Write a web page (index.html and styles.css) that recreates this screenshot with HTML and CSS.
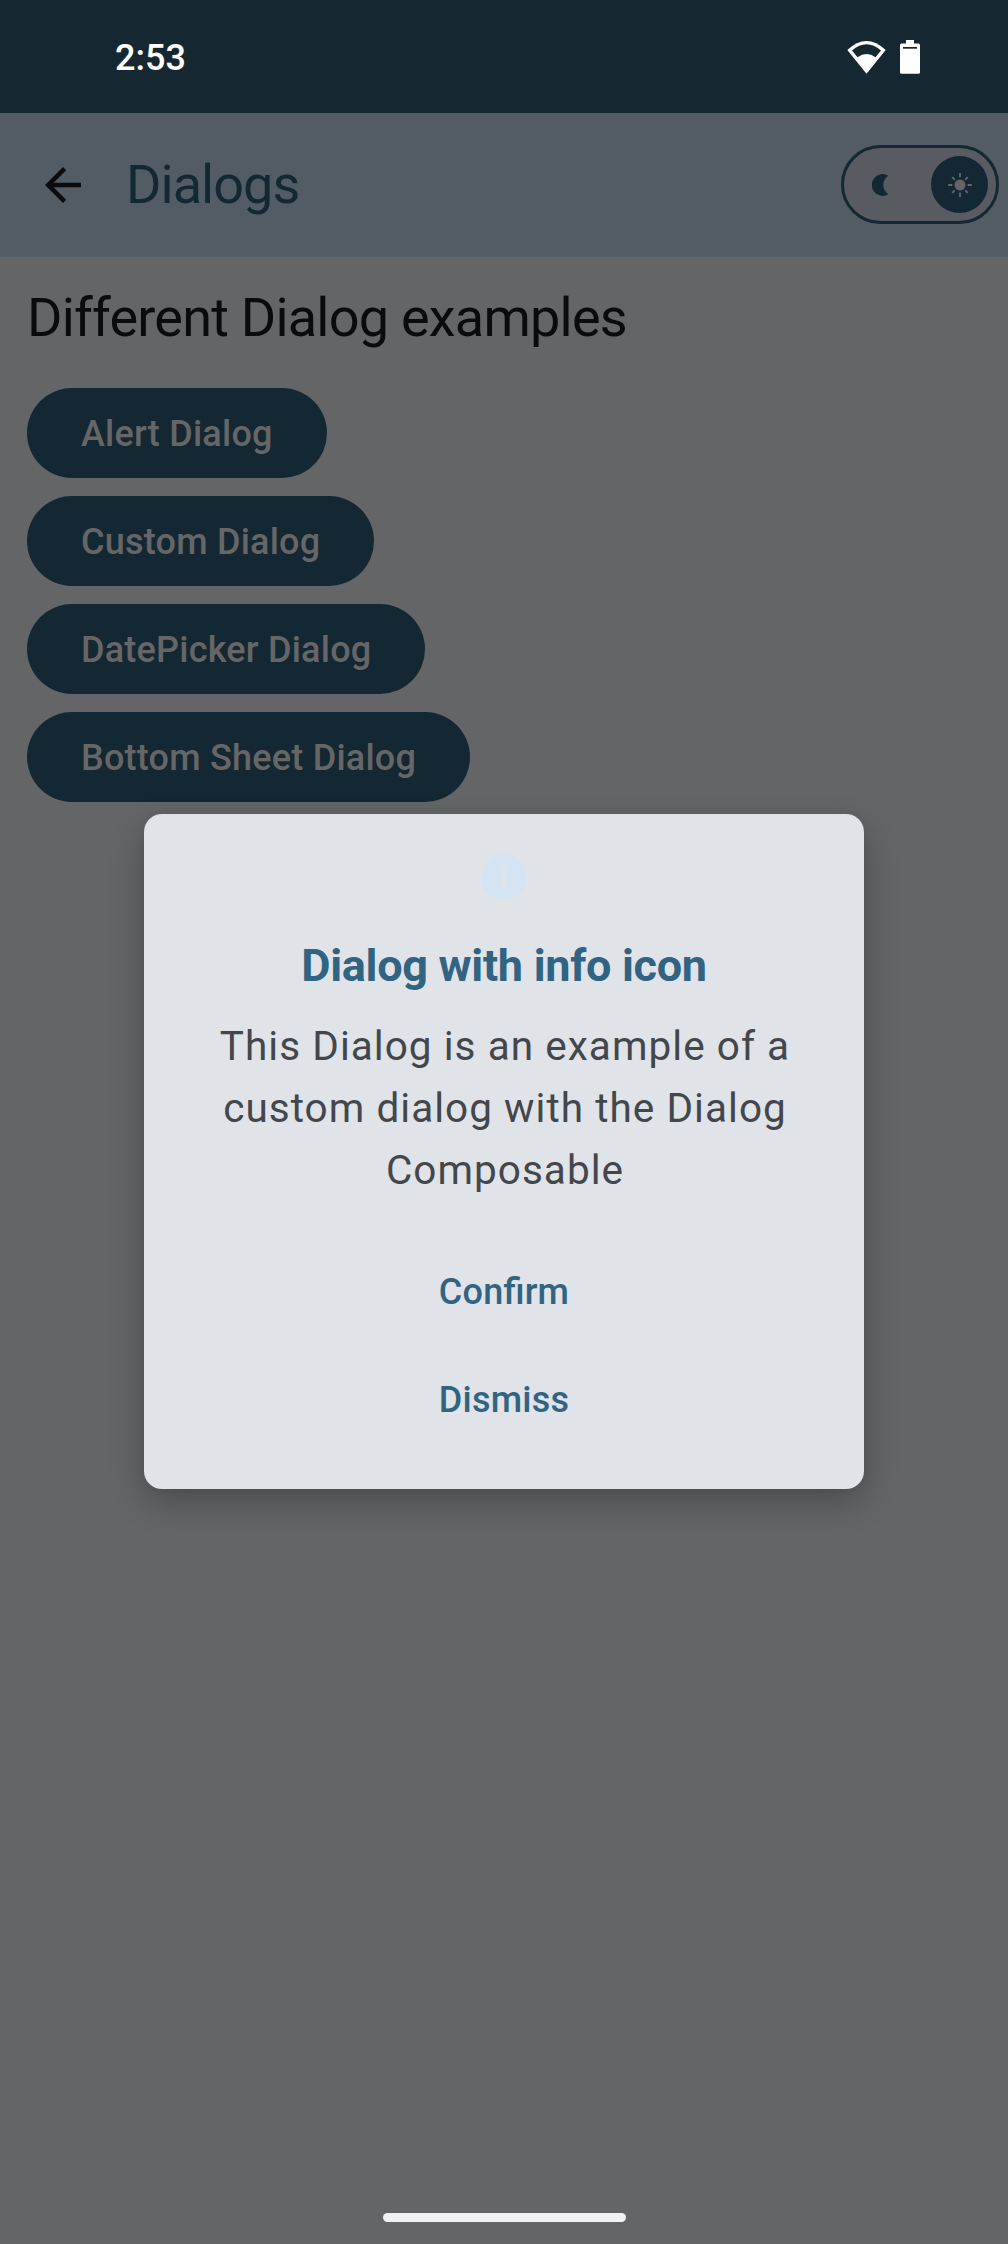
FILE: index.html
```html
<!DOCTYPE html>
<html lang="en">
<head>
<meta charset="utf-8">
<title>Dialogs</title>
<link rel="stylesheet" href="styles.css">
</head>
<body>
<div class="screen">
  <header class="status-bar">
    <span class="clock">2:53</span>
    <div class="status-icons">
      <svg class="wifi" viewBox="0 0 40 34" width="40" height="34">
        <path d="M.3 10Q19.500-8 38.700 10L19.500 33.700Z" fill="#fff"/>
        <path d="M5 10.600Q19.500-2 34 10.600L28.500 17.300Q19.500 10.700 10.500 17.300Z" fill="#152832"/>
      </svg>
      <svg class="battery" viewBox="0 0 20 34" width="20" height="34">
        <path d="M6 0h8v3.500h4.500a1.500 1.500 0 0 1 1.500 1.500v27.200a1.500 1.500 0 0 1-1.500 1.500h-17a1.500 1.500 0 0 1-1.500-1.500v-27.200a1.500 1.500 0 0 1 1.500-1.500h4.500z" fill="#fff"/>
        <path d="M3 7h14v1.700h-14z" fill="#152832"/>
      </svg>
    </div>
  </header>
  <nav class="app-bar">
    <svg class="back" viewBox="0 0 24 24" width="54" height="54"><path d="M20 11H7.830l5.590-5.590L12 4l-8 8 8 8 1.410-1.410L7.830 13H20v-2z" fill="#0a0b0c"/></svg>
    <h1 class="app-title">Dialogs</h1>
    <div class="theme-toggle">
      <svg class="moon" viewBox="0 0 17 22" width="17" height="22"><path d="M16.300 1.700A10.900 10.900 0 1 0 16.300 20.300Q11.300 16.500 11.300 11Q11.300 5.500 16.300 1.700Z" fill="#142833"/></svg>
      <div class="thumb">
        <svg viewBox="0 0 24 24" width="24" height="24">
          <circle cx="12" cy="12" r="5.500" fill="#646566"/>
          <path d="M12 .8v2.800M12 20.400v2.800M.8 12h2.800M20.400 12h2.800M4.700 4.700l1.500 1.500M17.800 17.800l1.500 1.500M4.700 19.300l1.500-1.500M17.800 6.200l1.500-1.500" stroke="#646566" stroke-width="1.900" stroke-linecap="round"/>
        </svg>
      </div>
    </div>
  </nav>
  <main class="content">
    <h2 class="heading">Different Dialog examples</h2>
    <div class="button-list">
      <button class="filled">Alert Dialog</button>
      <button class="filled">Custom Dialog</button>
      <button class="filled">DatePicker Dialog</button>
      <button class="filled">Bottom Sheet Dialog</button>
    </div>
  </main>
  <div class="nav-handle"></div>
  <section class="dialog" role="dialog">
    <svg class="info" viewBox="0 0 24 24" width="54" height="54"><path d="M12 2C6.480 2 2 6.480 2 12s4.480 10 10 10 10-4.480 10-10S17.520 2 12 2zm1 15h-2v-6h2v6zm0-8h-2V7h2v2z" fill="#d4e4f3"/></svg>
    <h3 class="dialog-title">Dialog with info icon</h3>
    <p class="dialog-text">This Dialog is an example of a custom dialog with the Dialog Composable</p>
    <div class="actions">
      <button class="text-button">Confirm</button>
      <button class="text-button">Dismiss</button>
    </div>
  </section>
</div>
</body>
</html>
```
FILE: styles.css
```css
* { box-sizing: border-box; margin: 0; padding: 0; }
body { font-family: Roboto, sans-serif; }
button { border: 0; background: none; font: inherit; white-space: nowrap; }
.screen {
  position: relative;
  display: flex;
  flex-direction: column;
  width: 1008px;
  height: 2244px;
  background: #646566;
  overflow: hidden;
}
.status-bar {
  display: flex;
  align-items: center;
  justify-content: space-between;
  height: 113px;
  padding: 0 88px 0 115px;
  background: #152832;
}
.clock { font-size: 36px; font-weight: 500; line-height: 42px; color: #fff; padding-top: 2px; }
.status-icons { display: flex; align-items: center; gap: 13px; margin-top: 1px; }
.app-bar {
  display: flex;
  align-items: center;
  height: 144px;
  padding: 0 9px 0 36px;
  background: #525c64;
}
.app-title { margin-left: 36px; font-size: 54px; font-weight: 400; line-height: 72px; letter-spacing: -.95px; color: #142833; }
.theme-toggle {
  display: flex;
  align-items: center;
  justify-content: space-between;
  width: 158px;
  height: 79px;
  margin: 0 0 1px auto;
  padding: 0 8px 0 28px;
  border: 3px solid #142833;
  border-radius: 40px;
  background: #585b62;
}
.thumb {
  display: flex;
  align-items: center;
  justify-content: center;
  width: 57px;
  height: 57px;
  border-radius: 50%;
  background: #142833;
}
.content { flex: 1; padding: 27px; }
.heading { font-size: 54px; font-weight: 400; line-height: 68px; letter-spacing: -.77px; color: #0a0b0c; }
.button-list { display: flex; flex-direction: column; align-items: flex-start; gap: 18px; margin-top: 36px; }
.filled {
  height: 90px;
  padding: 2px 54px 0;
  border-radius: 45px;
  background: #142833;
  color: #666;
  font-size: 36px;
  font-weight: 500;
  line-height: 45px;
  letter-spacing: .225px;
}
.nav-handle {
  align-self: center;
  width: 243px;
  height: 9px;
  margin-bottom: 22px;
  border-radius: 5px;
  background: #f2f2f2;
}
.dialog {
  position: absolute;
  left: 144px;
  top: 814px;
  display: flex;
  flex-direction: column;
  align-items: center;
  width: 720px;
  height: 675px;
  padding: 36px 45px;
  border-radius: 18px;
  background: #e0e3e8;
  box-shadow: 0 14px 34px rgba(0, 0, 0, .24), 0 0 8px rgba(0, 0, 0, .06);
}
.dialog-title { margin-top: 35px; font-size: 45px; font-weight: 700; line-height: 54px; letter-spacing: -.3px; color: #316482; }
.dialog-text { margin-top: 22px; padding-left: 2px; font-size: 40.5px; line-height: 62px; letter-spacing: 1.04px; text-align: center; color: #43474c; }
.actions { display: flex; flex-direction: column; align-items: center; gap: 18px; margin-top: 46px; }
.text-button {
  height: 90px;
  padding: 0 27px;
  font-size: 36px;
  font-weight: 500;
  line-height: 45px;
  letter-spacing: .225px;
  font-feature-settings: "liga" 1;
  color: #316482;
}
```
